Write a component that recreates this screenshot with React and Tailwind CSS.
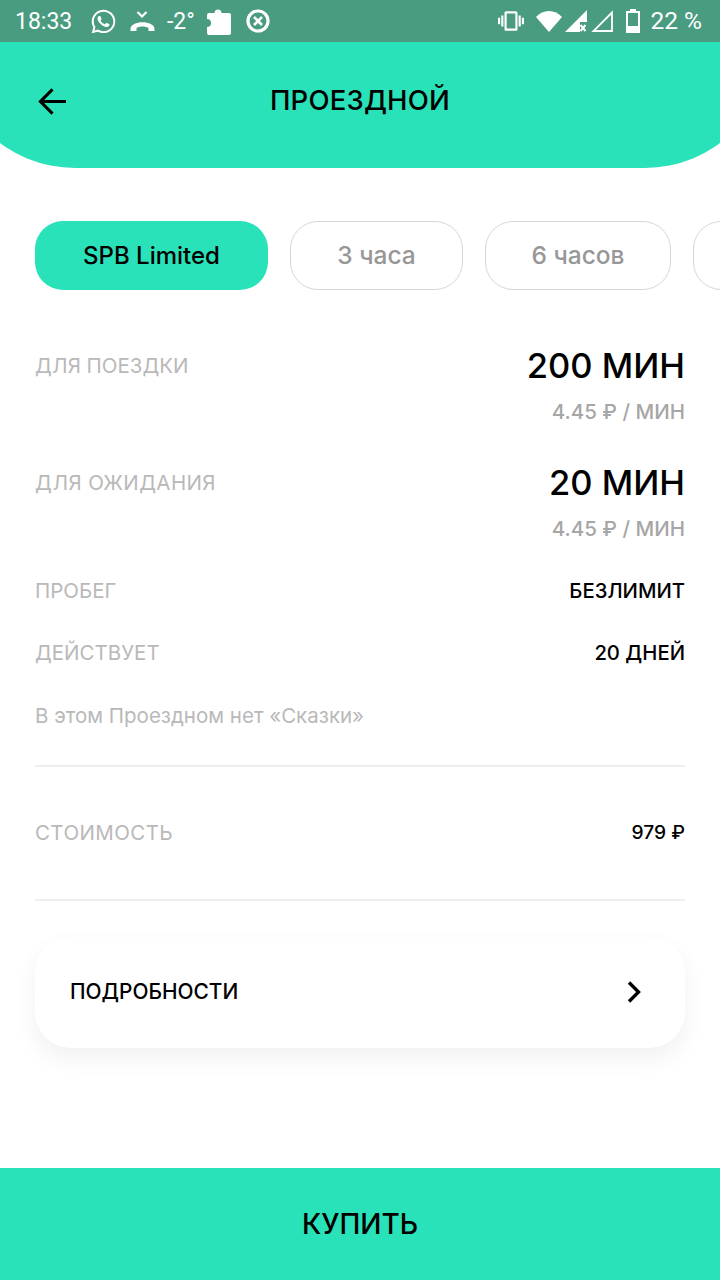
import React from "react";
import { FaWhatsapp } from "react-icons/fa";
import { MdVibration } from "react-icons/md";

const F = { fontFamily: '"Inter","Noto Sans",sans-serif' };

function Status() {
  return (
    <div className="h-[42px] bg-[#4a9c80] flex items-center justify-between pl-[15px] pr-[18px] text-white shrink-0 font-['Roboto',sans-serif]">
      <div className="flex items-center">
        <span className="text-[23px] leading-none w-[57px]">18:33</span>
        <FaWhatsapp className="ml-[18px] w-[27px] h-[27px]" />
        <svg viewBox="0 0 24 20" className="ml-[13px] w-[25px] h-[20px]" fill="none">
          <path d="M7 1l4.500 4.500L16 1" stroke="#fff" strokeWidth="2.2" />
          <path d="M0 18c0-9 24-9 24 0v2h-6v-3c-3-2-9-2-12 0v3H0z" fill="#fff" />
        </svg>
        <span className="ml-[12px] text-[23px] leading-none w-[32px]">-2°</span>
        <svg viewBox="0 0 24 28" className="ml-[8px] w-[24px] h-[28px]">
          <path d="M2 6h5.500a3.500 3.500 0 1 1 7 0H22a2 2 0 0 1 2 2v18a2 2 0 0 1-2 2H2a2 2 0 0 1-2-2v-6a4 4 0 0 0 0-8V8a2 2 0 0 1 2-2z" fill="#fff" />
        </svg>
        <svg viewBox="0 0 24 24" className="ml-[15px] w-[24px] h-[24px]" fill="none" stroke="#fff">
          <circle cx="12" cy="12" r="10" strokeWidth="3.2" />
          <path d="M8 8l8 8M16 8l-8 8" strokeWidth="2.6" />
        </svg>
      </div>
      <div className="flex items-center">
        <MdVibration className="w-[26px] h-[26px]" />
        <svg viewBox="0 0 26 22" className="ml-[12px] w-[26px] h-[22px]"><path d="M0 7C7-1 19-1 26 7L13 22z" fill="#fff" /></svg>
        <svg viewBox="0 0 22 22" className="ml-[3px] w-[22px] h-[22px]"><path d="M22 0v12h-7v10H0z" fill="#fff" /><path d="M15.500 15l5 6M20.500 15l-5 6" stroke="#fff" strokeWidth="2" /></svg>
        <svg viewBox="0 0 22 22" className="ml-[4px] w-[22px] h-[22px]" fill="none"><path d="M21 2.500V21H2.500z" stroke="#fff" strokeWidth="1.800" /></svg>
        <svg viewBox="0 0 14 24" className="ml-[13px] w-[14px] h-[24px]"><path fillRule="evenodd" d="M4 0h6v2h4v22H0V2h4zM2 4v13h10V4z" fill="#fff" /></svg>
        <span className="ml-[10px] text-[24.500px] leading-none">22 %</span>
      </div>
    </div>
  );
}

function Pill({ children, active, w }) {
  return (
    <div className={`h-[69px] shrink-0 rounded-[28px] flex items-center justify-center font-medium ${w} ${active ? "bg-[#2ae2b9] text-black text-[24px]" : "border border-[#d6d6d6] text-[#979797] text-[24.500px]"}`}>
      {children}
    </div>
  );
}

function Label({ children, wide }) {
  return <span className={`text-[20.500px] leading-none text-[#b9b9b9] ${wide ? "tracking-[0.4px]" : ""}`}>{children}</span>;
}

function Fare({ label, value, wide }) {
  return (
    <div className="h-[117px] flex justify-between">
      <div className="h-[56px] flex items-center"><Label wide={wide}>{label}</Label></div>
      <div className="flex flex-col items-end">
        <div className="h-[56px] flex items-center text-[34.500px] font-medium leading-none text-black">{value}</div>
        <div className="h-[36px] flex items-center text-[20.500px] font-medium leading-none text-[#a6a6a6]">4.45 ₽ / МИН</div>
      </div>
    </div>
  );
}

export default function App() {
  return (
    <div className="w-[720px] h-[1280px] bg-white flex flex-col overflow-hidden" style={F}>
      <Status />
      <div className="h-[126px] shrink-0 flex items-center justify-center relative overflow-hidden pb-[8px]">
        <div className="absolute -left-[50px] -right-[50px] top-0 bottom-0 bg-[#2ae2b9] rounded-b-[125px]" />
        <svg viewBox="0 0 30 28" className="absolute left-[38px] top-[46px] w-[29px] h-[27px]" fill="none" stroke="#000" strokeWidth="3.200">
          <path d="M29 14H3M15 1.500L2.500 14 15 26.500" />
        </svg>
        <span className="relative text-[27.500px] leading-none font-medium text-black tracking-[0.2px]">ПРОЕЗДНОЙ</span>
      </div>

      <div className="flex gap-[22px] pl-[35px] mt-[53px]">
        <Pill active w="w-[233px]">SPB Limited</Pill>
        <Pill w="w-[173px]">3 часа</Pill>
        <Pill w="w-[186px]">6 часов</Pill>
        <Pill w="w-[186px]" />
      </div>

      <div className="px-[35px] mt-[48px] flex flex-col">
        <Fare label="ДЛЯ ПОЕЗДКИ" value="200 МИН" />
        <Fare wide label="ДЛЯ ОЖИДАНИЯ" value="20 МИН" />
        <div className="h-[38px] flex justify-between items-center">
          <Label>ПРОБЕГ</Label>
          <span className="text-[20.300px] font-medium leading-none text-black">БЕЗЛИМИТ</span>
        </div>
        <div className="h-[38px] mt-[24px] flex justify-between items-center">
          <Label>ДЕЙСТВУЕТ</Label>
          <span className="text-[20.300px] font-medium leading-none text-black">20 ДНЕЙ</span>
        </div>
        <div className="h-[38px] mt-[25px] flex items-center text-[20.500px] leading-none text-[#b9b9b9]">В этом Проездном нет «Сказки»</div>
        <div className="h-[2px] mt-[30px] bg-[#eeeeee]" />
        <div className="h-[40px] mt-[46px] flex justify-between items-center">
          <Label wide>СТОИМОСТЬ</Label>
          <span className="text-[19.200px] font-medium leading-none text-black">979 ₽</span>
        </div>
        <div className="h-[2px] mt-[46px] bg-[#eeeeee]" />
        <div className="h-[111px] mt-[36px] rounded-[36px] bg-white shadow-[0_10px_24px_rgba(0,0,0,0.06)] flex items-center justify-between pl-[35px] pr-[44px]">
          <span className="text-[20.900px] font-medium leading-none text-black">ПОДРОБНОСТИ</span>
          <svg viewBox="0 0 14 22" className="w-[14px] h-[22px] -translate-y-[1px]" fill="none" stroke="#000" strokeWidth="3.400"><path d="M2 1.500L11.500 11 2 20.500" /></svg>
        </div>
      </div>

      <div className="mt-auto h-[112px] shrink-0 bg-[#2ae2b9] flex items-center justify-center text-[28px] font-medium text-black">КУПИТЬ</div>
    </div>
  );
}
